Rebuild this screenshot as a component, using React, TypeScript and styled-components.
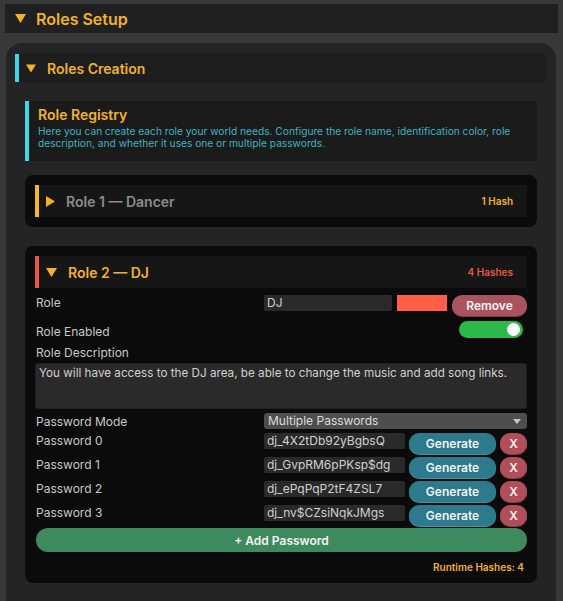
import React from "react";
import styled, { createGlobalStyle } from "styled-components";

const Global = createGlobalStyle`
  html, body { margin: 0; padding: 0; background: #383838; }
  body { font-family: Inter, "Noto Sans", "Liberation Sans", sans-serif; }
  * { box-sizing: border-box; }
`;

const ORANGE = "#f2b22a";
const CYAN = "#3fd6e6";

const Page = styled.div`
  padding: 4px 5px 0 5px;
  height: 601px;
  overflow: hidden;
`;

const TopHeader = styled.div`
  height: 29px;
  background: #202020;
  display: flex;
  align-items: center;
  padding-left: 10px;
  gap: 10px;
  color: ${ORANGE};
  font-weight: 600;
  font-size: 16px;
`;

const OuterPanel = styled.div`
  margin: 10px 2px 0 1px;
  background: #242424;
  border-radius: 16px 16px 0 0;
  padding: 11px 10px 0 9px;
  min-height: 560px;
`;

const SectionHeader = styled.div`
  height: 28px;
  background: #1e1e1e;
  border-left: 4px solid ${CYAN};
  display: flex;
  align-items: center;
  padding-left: 7px;
  gap: 11px;
  color: ${ORANGE};
  font-weight: 600;
  font-size: 14px;
`;

const SectionBody = styled.div`
  padding: 19px 9px 0 10px;
  display: flex;
  flex-direction: column;
`;

const InfoBox = styled.div`
  background: #1b1b1b;
  border-left: 4px solid ${CYAN};
  padding: 5px 8px 9px 9px;
  height: 60px;
`;

const InfoTitle = styled.div`
  color: ${ORANGE};
  font-weight: 600;
  font-size: 14px;
  line-height: 18px;
`;

const InfoText = styled.div`
  color: #3fb2c2;
  font-size: 10.2px;
  line-height: 12px;
  margin-top: 1px;
`;

const Card = styled.div<{ $gap: number }>`
  margin-top: ${(p) => p.$gap}px;
  background: #0b0b0b;
  border-radius: 8px;
  padding: 10px;
  display: flex;
  flex-direction: column;
`;

const CardHeader = styled.div<{ $bar: string }>`
  height: 32px;
  background: #161616;
  border-left: 4px solid ${(p) => p.$bar};
  display: flex;
  align-items: center;
  padding: 0 14px 0 7px;
`;

const CardTitle = styled.div<{ $color: string }>`
  margin-left: 11px;
  flex: 1;
  color: ${(p) => p.$color};
  font-weight: 600;
  font-size: 14px;
`;

const HashCount = styled.div<{ $color: string }>`
  color: ${(p) => p.$color};
  font-weight: 600;
  font-size: 10px;
`;

const Row = styled.div<{ $mt: number; $h: number }>`
  margin-top: ${(p) => p.$mt}px;
  height: ${(p) => p.$h}px;
  display: grid;
  grid-template-columns: 229px 1fr;
  align-items: start;
`;

const Label = styled.div<{ $pt?: number }>`
  padding-left: 1px;
  padding-top: ${(p) => p.$pt ?? 0}px;
  color: #c8c8c8;
  font-size: 12px;
  line-height: 16px;
`;

const Fields = styled.div<{ $gap?: number }>`
  display: flex;
  align-items: flex-start;
  gap: ${(p) => p.$gap ?? 4}px;
`;

const TextInput = styled.div<{ $w: number }>`
  width: ${(p) => p.$w}px;
  height: 16px;
  background: #2a2a2a;
  border-radius: 2px;
  color: #d0d0d0;
  font-size: 12px;
  line-height: 16px;
  padding-left: 3px;
  white-space: nowrap;
  overflow: hidden;
`;

const Swatch = styled.div`
  width: 50px;
  height: 16px;
  background: #ff5f45;
`;

const PillButton = styled.div<{ $w: number; $bg: string; $rim: string }>`
  width: ${(p) => p.$w}px;
  height: 21px;
  background: ${(p) => p.$bg};
  border-radius: 10px;
  color: #f4f4f4;
  font-weight: 600;
  font-size: 12px;
  display: flex;
  align-items: center;
  justify-content: center;
  box-shadow: 0 1px 0 ${(p) => p.$rim};
`;

const ToggleRow = styled.div`
  display: flex;
  justify-content: flex-end;
  padding-right: 4px;
`;

const Toggle = styled.div`
  width: 64px;
  height: 17px;
  border-radius: 9px;
  background: #2cb84b;
  display: flex;
  align-items: center;
  justify-content: flex-end;
  padding-right: 3px;
`;

const Knob = styled.div`
  width: 13px;
  height: 13px;
  border-radius: 50%;
  background: #ffffff;
`;

const DescLabel = styled.div`
  margin-top: 7px;
  padding-left: 1px;
  color: #c8c8c8;
  font-size: 12px;
  line-height: 16px;
`;

const TextArea = styled.div`
  margin-top: 2px;
  height: 46px;
  background: #2a2a2a;
  border: 1px solid #202020;
  border-radius: 3px;
  color: #d0d0d0;
  font-size: 11.7px;
  line-height: 16px;
  padding: 1px 3px;
  white-space: nowrap;
  overflow: hidden;
`;

const Dropdown = styled.div`
  height: 16px;
  background: #4e4e4e;
  border-radius: 3px;
  color: #dcdcdc;
  font-size: 12px;
  line-height: 16px;
  padding: 0 6px 0 4px;
  display: flex;
  align-items: center;
  justify-content: space-between;
`;

const AddButton = styled.div`
  margin: 2px 0 0 1px;
  height: 24px;
  background: #3e8a5e;
  border-radius: 12px;
  color: #f4f4f4;
  font-weight: 600;
  font-size: 12px;
  display: flex;
  align-items: center;
  justify-content: center;
`;

const Runtime = styled.div`
  margin-top: 9px;
  align-self: flex-end;
  padding-right: 3px;
  color: ${ORANGE};
  font-weight: 600;
  font-size: 10px;
  line-height: 12px;
`;

const Down = ({ w = 11, h = 9, c = ORANGE }: { w?: number; h?: number; c?: string }) => (
  <svg width={w} height={h} viewBox="0 0 11 9">
    <polygon points="0,0 11,0 5.5,9" fill={c} />
  </svg>
);

const Right = ({ c = ORANGE }: { c?: string }) => (
  <svg width={9} height={11} viewBox="0 0 9 11">
    <polygon points="0,0 9,5.5 0,11" fill={c} />
  </svg>
);

const Caret = () => (
  <svg width={8} height={5} viewBox="0 0 8 5">
    <polygon points="0,0 8,0 4,5" fill="#c8c8c8" />
  </svg>
);

const passwords = [
  "dj_4X2tDb92yBgbsQ",
  "dj_GvpRM6pPKsp$dg",
  "dj_ePqPqP2tF4ZSL7",
  "dj_nv$CZsiNqkJMgs",
];

export default function App() {
  return (
    <>
      <Global />
      <Page>
        <TopHeader>
          <Down />
          Roles Setup
        </TopHeader>
        <OuterPanel>
          <SectionHeader>
            <Down w={10} h={9} />
            Roles Creation
          </SectionHeader>
          <SectionBody>
            <InfoBox>
              <InfoTitle>Role Registry</InfoTitle>
              <InfoText>
                Here you can create each role your world needs. Configure the role name, identification color, role
                <br />
                description, and whether it uses one or multiple passwords.
              </InfoText>
            </InfoBox>

            <Card $gap={14}>
              <CardHeader $bar="#f5b82a">
                <Right />
                <CardTitle $color="#8c8c8c">Role 1 — Dancer</CardTitle>
                <HashCount $color={ORANGE}>1 Hash</HashCount>
              </CardHeader>
            </Card>

            <Card $gap={19}>
              <CardHeader $bar="#e8573f">
                <Down />
                <CardTitle $color={ORANGE}>Role 2 — DJ</CardTitle>
                <HashCount $color="#e4583c">4 Hashes</HashCount>
              </CardHeader>

              <Row $mt={7} $h={22}>
                <Label>Role</Label>
                <Fields $gap={5}>
                  <TextInput $w={128}>DJ</TextInput>
                  <Swatch />
                  <PillButton $w={75} $bg="#a9535f" $rim="#7e3d47">
                    Remove
                  </PillButton>
                </Fields>
              </Row>

              <Row $mt={4} $h={17}>
                <Label $pt={3}>Role Enabled</Label>
                <ToggleRow>
                  <Toggle>
                    <Knob />
                  </Toggle>
                </ToggleRow>
              </Row>

              <DescLabel>Role Description</DescLabel>
              <TextArea>You will have access to the DJ area, be able to change the music and add song links.</TextArea>

              <Row $mt={4} $h={16}>
                <Label $pt={1}>Password Mode</Label>
                <Dropdown>
                  Multiple Passwords
                  <Caret />
                </Dropdown>
              </Row>

              {passwords.map((pw, i) => (
                <Row key={pw} $mt={i === 0 ? 4 : 3} $h={21}>
                  <Label>Password {i}</Label>
                  <Fields>
                    <TextInput $w={141}>{pw}</TextInput>
                    <PillButton $w={87} $bg="#2c7a8c" $rim="#3e95a8">
                      Generate
                    </PillButton>
                    <PillButton $w={27} $bg="#b14e59" $rim="#8d3c45">
                      X
                    </PillButton>
                  </Fields>
                </Row>
              ))}

              <AddButton>+ Add Password</AddButton>
              <Runtime>Runtime Hashes: 4</Runtime>
            </Card>
          </SectionBody>
        </OuterPanel>
      </Page>
    </>
  );
}
